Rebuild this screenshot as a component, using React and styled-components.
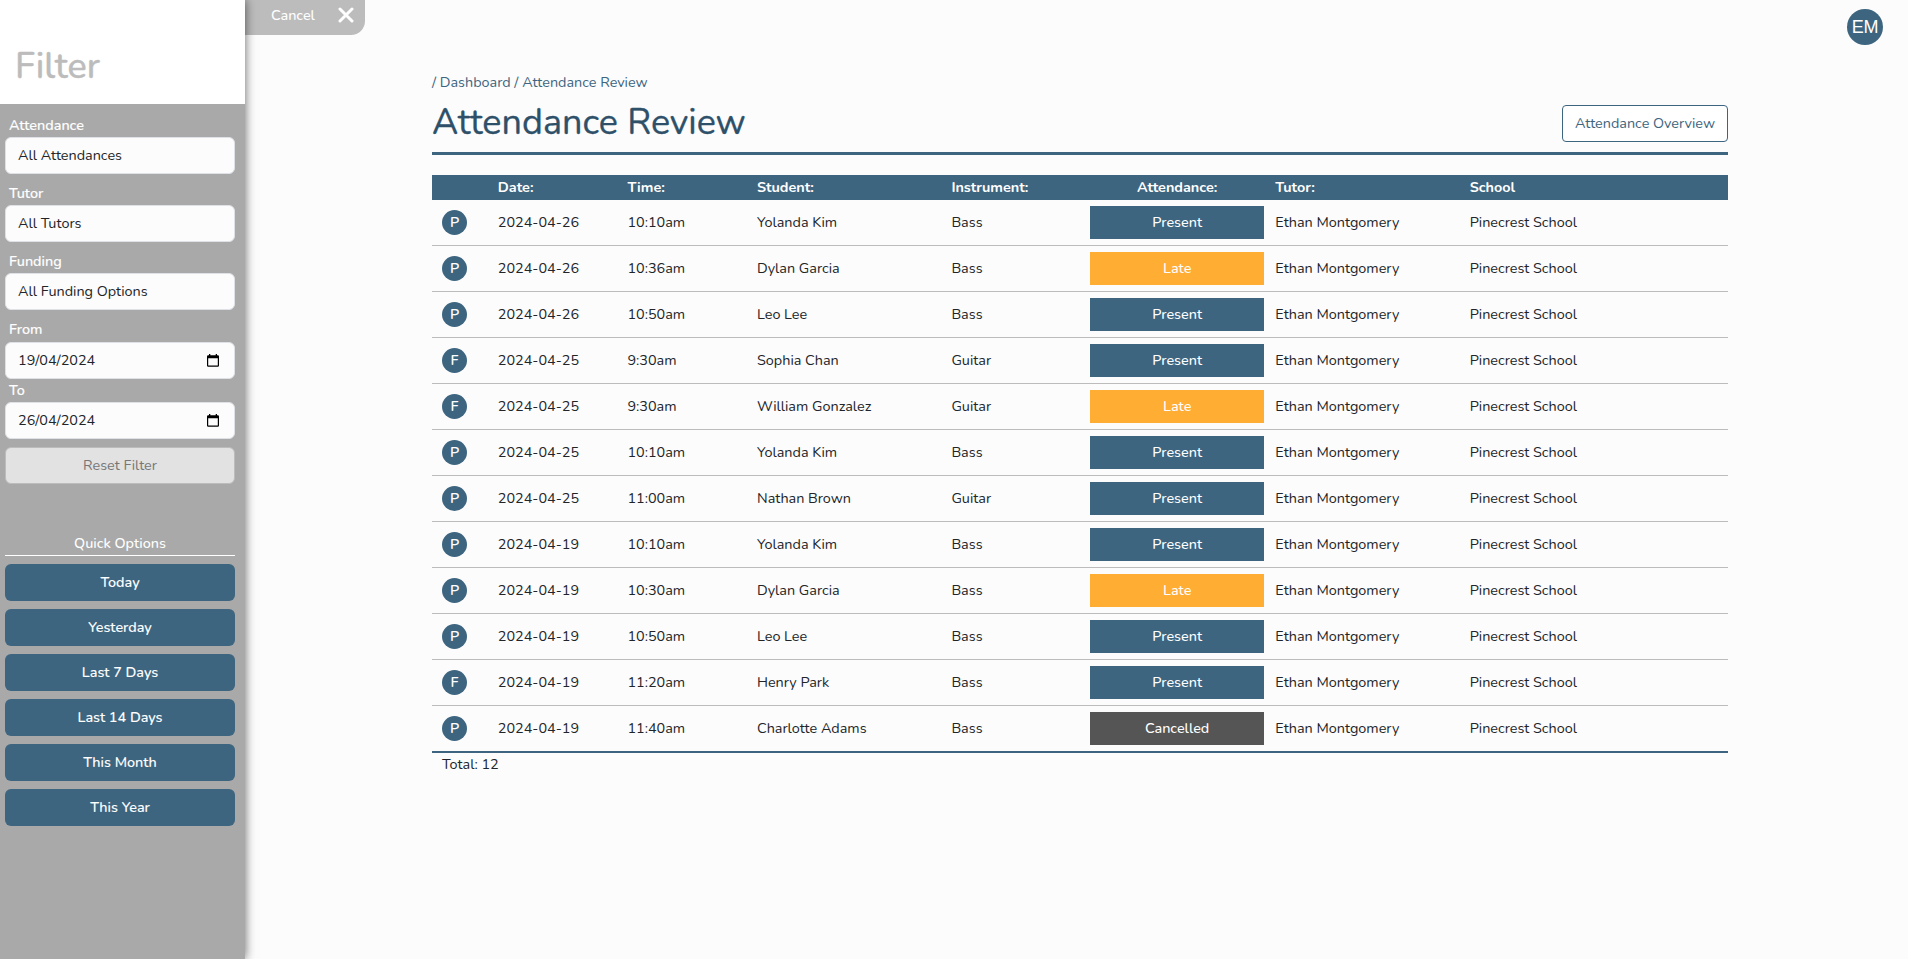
import React from "react";
import styled, { createGlobalStyle } from "styled-components";

const blue = "#3d6580";

const GlobalStyle = createGlobalStyle`
  * { box-sizing: border-box; }
  body {
    margin: 0;
    background: #fcfcfc;
    color: #212529;
    font-family: Nunito, Lato, "Noto Sans", sans-serif;
    font-size: 14.4px;
    line-height: 24px;
    overflow: hidden;
  }
  button { font: inherit; }
`;

const Page = styled.div`
  display: flex;
  align-items: flex-start;
  height: 959px;
`;

const Sidebar = styled.aside`
  flex: none;
  position: relative;
  z-index: 1;
  width: 245px;
  height: 959px;
  background: #a9a9a9;
  box-shadow: 0 0 10px rgba(0, 0, 0, 0.6);
`;

const SidebarHeader = styled.header`
  height: 104px;
  padding: 47px 0 0 15px;
  background: #fff;
`;

const SidebarTitle = styled.h2`
  margin: 0;
  color: #bcbcbc;
  font-size: 36px;
  font-weight: 500;
  line-height: 40px;
  -webkit-text-stroke: 0.4px #bcbcbc;
`;

const FilterForm = styled.div`
  display: flex;
  flex-direction: column;
  padding: 10px 10px 0 5px;
`;

const Label = styled.label`
  height: ${(p) => p.$height || 23}px;
  margin-top: ${(p) => p.$top}px;
  padding-left: 4px;
  color: #fff;
  font-weight: 500;
  line-height: 23px;
  -webkit-text-stroke: 0.15px #fff;
`;

const Field = styled.div`
  display: flex;
  align-items: center;
  justify-content: space-between;
  height: 37px;
  padding: 0 15px 1px 12px;
  border: 1px solid #dee2e6;
  border-radius: 6px;
  background: #fcfcfc;
`;

const CalendarIcon = styled.svg`
  width: 12px;
  height: 13px;
  flex: none;
`;

const ResetButton = styled.button`
  height: 37px;
  margin-top: 8px;
  padding: 0 0 1px;
  border: 1px solid #bcbcbc;
  border-radius: 6px;
  background: #e2e2e2;
  color: #777;
`;

const QuickTitle = styled.div`
  margin-top: 47px;
  height: 25px;
  border-bottom: 1px solid #fff;
  color: #fff;
  font-weight: 500;
  line-height: 24px;
  text-align: center;
`;

const QuickList = styled.div`
  display: flex;
  flex-direction: column;
  gap: 8px;
  padding-top: 8px;
`;

const QuickButton = styled.button`
  height: 37px;
  padding: 0 0 1px;
  border: 0;
  border-radius: 6px;
  background: ${blue};
  color: #fff;
  font-weight: 500;
  -webkit-text-stroke: 0.1px #fff;
`;

const CancelTab = styled.button`
  flex: none;
  display: flex;
  align-items: center;
  justify-content: space-between;
  width: 120px;
  height: 35px;
  padding: 0 11px 5px 26px;
  border: 0;
  border-radius: 0 0 14px 0;
  background: #bcbcbc;
  color: #fff;
  font-weight: 500;
  line-height: 22px;
`;

const CloseIcon = styled.svg`
  width: 16px;
  height: 16px;
`;

const Main = styled.main`
  flex: none;
  width: 1296px;
  margin-left: 67px;
  padding-top: 70px;
`;

const Breadcrumb = styled.nav`
  color: ${blue};
`;

const TitleBar = styled.div`
  display: flex;
  justify-content: space-between;
  height: 61px;
  border-bottom: 3px solid ${blue};
`;

const Title = styled.h1`
  margin: 0;
  padding-top: 5px;
  color: #2e5069;
  font-size: 36px;
  font-weight: 400;
  line-height: 48px;
  -webkit-text-stroke: 0.3px #2e5069;
`;

const OverviewButton = styled.button`
  width: 166px;
  height: 37px;
  margin-top: 11px;
  padding: 0 0 1px;
  border: 1px solid ${blue};
  border-radius: 4px;
  background: #fff;
  color: ${blue};
`;

const Table = styled.div`
  margin-top: 20px;
  border-bottom: 2px solid ${blue};
`;

const Row = styled.div`
  display: grid;
  grid-template-columns: 5% 10% 10% 15% 10% 15% 15% 20%;
  align-items: center;
  height: 46px;
  border-bottom: 1px solid #bcbcbc;
  &:last-child {
    height: 45px;
    border-bottom: 0;
  }
`;

const HeadRow = styled(Row)`
  height: 25px;
  border: 0;
  background: ${blue};
  color: #fff;
  font-weight: 700;
`;

const Cell = styled.div`
  padding: 0 1px 1px;
  text-align: ${(p) => p.$align || "left"};
  white-space: nowrap;
`;

const Badge = styled.span`
  display: flex;
  align-items: center;
  justify-content: center;
  width: 25px;
  height: 25px;
  margin-left: 10px;
  padding-bottom: 1px;
  border-radius: 50%;
  background: ${blue};
  color: #fff;
  font-weight: 600;
`;

const statusColors = { Present: blue, Late: "#ffad33", Cancelled: "#555" };

const Status = styled.div`
  height: 33px;
  margin: 0 10px;
  background: ${(p) => statusColors[p.$status]};
  color: #fff;
  font-weight: 500;
  line-height: 33px;
  text-align: center;
`;

const Total = styled.div`
  padding-left: 10px;
  line-height: 22px;
`;

const Avatar = styled.div`
  flex: none;
  display: flex;
  align-items: center;
  justify-content: center;
  width: 36px;
  height: 36px;
  margin: 9px 25px 0 auto;
  border-radius: 50%;
  background: ${blue};
  color: #fff;
  font-family: "Liberation Sans", sans-serif;
  font-size: 18px;
  letter-spacing: -0.3px;
`;

const lessons = [
  ["P", "2024-04-26", "10:10am", "Yolanda Kim", "Bass", "Present"],
  ["P", "2024-04-26", "10:36am", "Dylan Garcia", "Bass", "Late"],
  ["P", "2024-04-26", "10:50am", "Leo Lee", "Bass", "Present"],
  ["F", "2024-04-25", "9:30am", "Sophia Chan", "Guitar", "Present"],
  ["F", "2024-04-25", "9:30am", "William Gonzalez", "Guitar", "Late"],
  ["P", "2024-04-25", "10:10am", "Yolanda Kim", "Bass", "Present"],
  ["P", "2024-04-25", "11:00am", "Nathan Brown", "Guitar", "Present"],
  ["P", "2024-04-19", "10:10am", "Yolanda Kim", "Bass", "Present"],
  ["P", "2024-04-19", "10:30am", "Dylan Garcia", "Bass", "Late"],
  ["P", "2024-04-19", "10:50am", "Leo Lee", "Bass", "Present"],
  ["F", "2024-04-19", "11:20am", "Henry Park", "Bass", "Present"],
  ["P", "2024-04-19", "11:40am", "Charlotte Adams", "Bass", "Cancelled"],
];

const quickOptions = ["Today", "Yesterday", "Last 7 Days", "Last 14 Days", "This Month", "This Year"];

function Calendar() {
  return (
    <CalendarIcon viewBox="0 0 12 13">
      <path
        fill="#000"
        fillRule="evenodd"
        d="M2 0h1.3v1.2h5.4V0H10v1.2h.8A1.2 1.2 0 0 1 12 2.4v9.2a1.2 1.2 0 0 1-1.2 1.2H1.2A1.2 1.2 0 0 1 0 11.6V2.4A1.2 1.2 0 0 1 1.2 1.2H2zM1.2 4.2v7.4h9.6V4.2z"
      />
    </CalendarIcon>
  );
}

export default function App() {
  return (
    <>
      <GlobalStyle />
      <Page>
        <Sidebar>
          <SidebarHeader>
            <SidebarTitle>Filter</SidebarTitle>
          </SidebarHeader>
          <FilterForm>
            <Label $top={0}>Attendance</Label>
            <Field>All Attendances</Field>
            <Label $top={8}>Tutor</Label>
            <Field>All Tutors</Field>
            <Label $top={8}>Funding</Label>
            <Field>All Funding Options</Field>
            <Label $top={8} $height={24}>From</Label>
            <Field>19/04/2024<Calendar /></Field>
            <Label $top={0}>To</Label>
            <Field>26/04/2024<Calendar /></Field>
            <ResetButton>Reset Filter</ResetButton>
            <QuickTitle>Quick Options</QuickTitle>
            <QuickList>
              {quickOptions.map((option) => (
                <QuickButton key={option}>{option}</QuickButton>
              ))}
            </QuickList>
          </FilterForm>
        </Sidebar>
        <CancelTab>
          Cancel
          <CloseIcon viewBox="0 0 16 16">
            <path d="M2 2L14 14M14 2L2 14" stroke="#fff" strokeWidth="3" strokeLinecap="round" />
          </CloseIcon>
        </CancelTab>
        <Main>
          <Breadcrumb>/ Dashboard / Attendance Review</Breadcrumb>
          <TitleBar>
            <Title>Attendance Review</Title>
            <OverviewButton>Attendance Overview</OverviewButton>
          </TitleBar>
          <Table>
            <HeadRow>
              <Cell />
              <Cell>Date:</Cell>
              <Cell>Time:</Cell>
              <Cell>Student:</Cell>
              <Cell>Instrument:</Cell>
              <Cell $align="center">Attendance:</Cell>
              <Cell>Tutor:</Cell>
              <Cell>School</Cell>
            </HeadRow>
            {lessons.map(([type, date, time, student, instrument, status]) => (
              <Row key={date + time + student}>
                <Badge>{type}</Badge>
                <Cell>{date}</Cell>
                <Cell>{time}</Cell>
                <Cell>{student}</Cell>
                <Cell>{instrument}</Cell>
                <Status $status={status}>{status}</Status>
                <Cell>Ethan Montgomery</Cell>
                <Cell>Pinecrest School</Cell>
              </Row>
            ))}
          </Table>
          <Total>Total: 12</Total>
        </Main>
        <Avatar>EM</Avatar>
      </Page>
    </>
  );
}
